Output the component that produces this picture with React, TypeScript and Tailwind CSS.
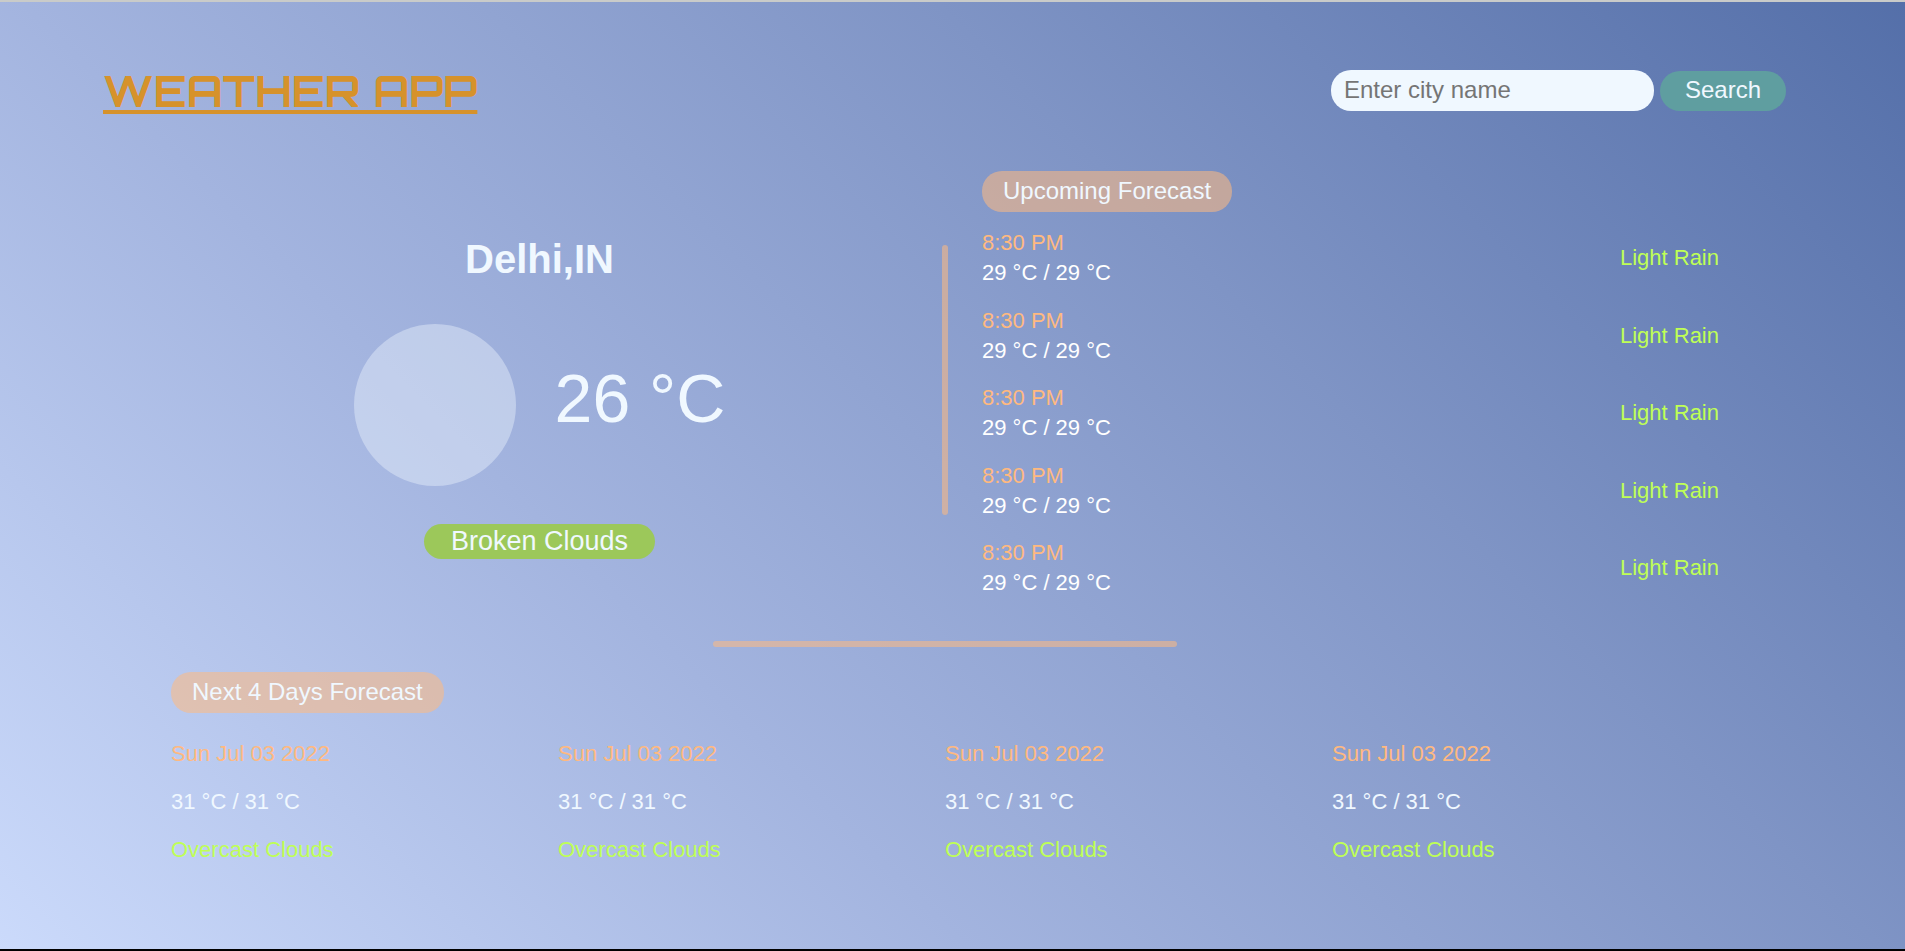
import { useState } from "react";

const hourly = Array.from({ length: 5 }, () => ({
  time: "8:30 PM",
  temp: "29 °C / 29 °C",
  sky: "Light Rain",
}));

const daily = Array.from({ length: 4 }, () => ({
  date: "Sun Jul 03 2022",
  temp: "31 °C / 31 °C",
  sky: "Overcast Clouds",
}));

function SectionTitle({ children }: { children: string }) {
  return (
    <h2 className="w-fit rounded-[20px] bg-[#ffb980]/55 px-[21px] pb-0.5 text-2xl leading-[39px] text-[#f0f8ff]">
      {children}
    </h2>
  );
}

function Header() {
  const [city, setCity] = useState("");
  return (
    <header className="flex items-start justify-between pr-px">
      <h1 className="font-['Orbitron','DejaVu_Sans',sans-serif] text-[43px] leading-[50px] font-bold text-[#d6922b] underline decoration-4 underline-offset-[3px] [text-decoration-skip-ink:none]">
        WEATHER APP
      </h1>
      <form className="mt-1 flex items-end gap-1.5" onSubmit={(e) => e.preventDefault()}>
        <input
          type="text"
          aria-label="City name"
          placeholder="Enter city name"
          value={city}
          onChange={(e) => setCity(e.target.value)}
          className="h-[41px] w-[323px] rounded-[20px] bg-[#f0f8ff] px-[13px] pb-0.5 text-2xl text-black outline-none placeholder:text-[#757575]"
        />
        <button type="submit" className="h-10 w-[126px] rounded-[20px] bg-[#5f9ea0] pb-0.5 text-2xl text-[#f0f8ff]">
          Search
        </button>
      </form>
    </header>
  );
}

function Current() {
  return (
    <section className="flex flex-col items-center pt-16">
      <h2 className="text-[40px] leading-[48px] font-bold text-[#f0f8ff]">Delhi,IN</h2>
      <div className="mt-[41px] flex items-center gap-[39px]">
        <div className="size-[162px] rounded-full bg-[#f0f8ff]/40" />
        <p className="pb-3.5 text-[68px] leading-[80px] text-[#f0f8ff]">26 °C</p>
      </div>
      <p className="mt-[38px] rounded-[18px] bg-[#9cc85a] px-[27px] text-[27px] leading-[35px] text-[#f0f8ff]">
        Broken Clouds
      </p>
    </section>
  );
}

function Upcoming() {
  return (
    <section>
      <SectionTitle>Upcoming Forecast</SectionTitle>
      <ul className="mt-4 flex h-[370px] flex-col justify-between text-[22px] leading-[30px]">
        {hourly.map((h, i) => (
          <li key={i} className="flex items-center justify-between">
            <div>
              <p className="text-[#ffb980]">{h.time}</p>
              <p className="text-white">{h.temp}</p>
            </div>
            <p className="text-[#bfff55]">{h.sky}</p>
          </li>
        ))}
      </ul>
    </section>
  );
}

export default function App() {
  return (
    <div className="min-h-screen border-t-2 border-b-2 border-t-[#c9cbc9] border-b-black bg-[linear-gradient(45deg,#cbdafb,#a3b4df_34%,#7f94c5_66%,#546fa9)] bg-origin-border pt-16 pr-[118px] pb-16 pl-[103px] font-['Liberation_Sans',Arial,sans-serif]">
      <Header />
      <main className="mt-[55px] px-[68px]">
        <div className="grid grid-cols-[1fr_6px_1fr] gap-[34px]">
          <Current />
          <div className="mt-[74px] h-[270px] rounded-[3px] bg-[#ffb980]/55" />
          <Upcoming />
        </div>
        <div className="mx-auto mt-[43px] h-1.5 w-[30%] rounded-[3px] bg-[#ffb980]/55" />
        <section className="mt-[25px]">
          <SectionTitle>Next 4 Days Forecast</SectionTitle>
          <ul className="mt-[26px] grid grid-cols-4 text-[22px] leading-[30px]">
            {daily.map((d, i) => (
              <li key={i} className="flex flex-col gap-[18px]">
                <p className="text-[#ffb980]">{d.date}</p>
                <p className="text-[#f0f8ff]">{d.temp}</p>
                <p className="text-[#bfff55]">{d.sky}</p>
              </li>
            ))}
          </ul>
        </section>
      </main>
    </div>
  );
}
